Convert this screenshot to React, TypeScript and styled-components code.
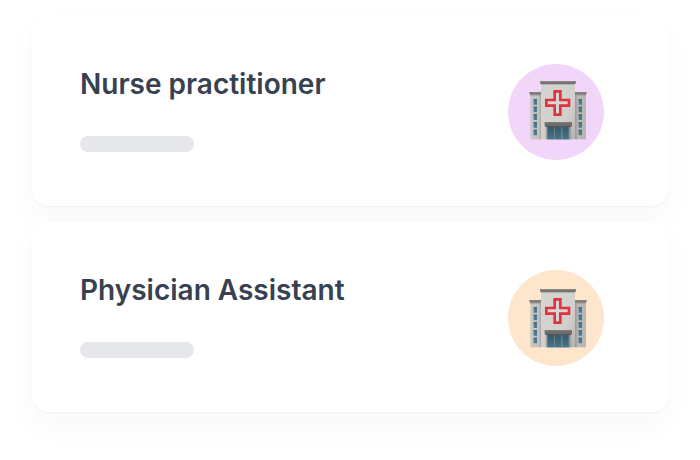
import React, { useId } from "react";
import styled, { createGlobalStyle } from "styled-components";

const GlobalStyle = createGlobalStyle`
  *, *::before, *::after { box-sizing: border-box; }
  body {
    margin: 0;
    background: #fff;
    color: #374151;
    font-family: Inter, "Liberation Sans", sans-serif;
  }
`;

const CardList = styled.main`
  display: flex;
  flex-direction: column;
  gap: 16px;
  min-height: 100vh;
  padding: 16px 32px;
`;

const Card = styled.article`
  display: flex;
  align-items: flex-start;
  justify-content: space-between;
  gap: 24px;
  padding: 48px 64px 46px 48px;
  border-radius: 16px;
  background: #fff;
  box-shadow: 0 1px 2px rgba(0, 0, 0, 0.04), 0 14px 32px rgba(0, 0, 0, 0.03);
`;

const Details = styled.div`
  display: flex;
  flex-direction: column;
  gap: 32px;
`;

const Title = styled.h2`
  margin: 0;
  font-size: 28px;
  font-weight: 600;
  font-optical-sizing: none;
  line-height: 40px;
`;

const Placeholder = styled.div`
  width: 114px;
  height: 16px;
  border-radius: 8px;
  background: #e5e7eb;
`;

const Avatar = styled.div<{ $tint: string }>`
  display: flex;
  flex: none;
  width: 96px;
  height: 96px;
  border-radius: 50%;
  background: ${({ $tint }) => $tint};
`;

const Drawing = styled.svg`
  width: 100%;
  height: 100%;
`;

const windowRows = [104, 127, 150, 173, 196];

function Hospital({ drop }: { drop: number }) {
  const id = useId();
  const wall = `${id}wall`;
  const left = `${id}left`;
  const right = `${id}right`;
  const roof = `${id}roof`;
  const glass = `${id}glass`;
  return (
    <Drawing viewBox="0 0 288 288" aria-hidden="true">
      <defs>
        <linearGradient id={wall} x1="0" y1="0" x2="1" y2="1">
          <stop offset="0" stopColor="#d6d4d0" />
          <stop offset="0.65" stopColor="#d2d0cd" />
          <stop offset="1" stopColor="#b4b2af" />
        </linearGradient>
        <linearGradient id={left}>
          <stop offset="0" stopColor="#c9c7c3" />
          <stop offset="0.75" stopColor="#c3c1be" />
          <stop offset="1" stopColor="#a5a3a0" />
        </linearGradient>
        <linearGradient id={right}>
          <stop offset="0" stopColor="#989795" />
          <stop offset="0.3" stopColor="#bdbbb8" />
          <stop offset="1" stopColor="#b7b5b2" />
        </linearGradient>
        <linearGradient id={roof} x1="0" y1="0" x2="0" y2="1">
          <stop offset="0" stopColor="#918f8d" />
          <stop offset="0.5" stopColor="#7a7876" />
          <stop offset="1" stopColor="#706e6c" />
        </linearGradient>
        <linearGradient id={glass} x1="0" y1="0" x2="0" y2="1">
          <stop offset="0" stopColor="#345668" />
          <stop offset="1" stopColor="#48768b" />
        </linearGradient>
      </defs>
      <g transform={`translate(0 ${drop})`}>
        <path d="M67 92h33v134H67z" fill={`url(#${left})`} />
        <path d="M201 92h33v134h-33z" fill={`url(#${right})`} />
        <path d="M63 84h37v8H66z" fill={`url(#${roof})`} />
        <path d="M201 84h36l-3 8h-33z" fill={`url(#${roof})`} />
        <path d="M67 92h33v3H67zM201 92h33v3h-33z" fill="#a5a3a0" />
        {windowRows.map((y) => (
          <g key={y}>
            <path d={`M77 ${y + 1}h10v17H77zM212 ${y + 1}h10v17h-10z`} fill="#487b92" />
            <path d={`M77 ${y + 1}h10v4H77zM212 ${y + 1}h10v4h-10z`} fill="#466a7b" />
          </g>
        ))}
        <path d="M99 58h102v168H99z" fill={`url(#${wall})`} />
        <path d="M99 59h102v3H99z" fill="#aaa8a5" />
        <path d="M96 51h108v6l-3 3H99l-3-3z" fill={`url(#${roof})`} />
        <path
          d="M140 82h17v26h26v17h-26v27h-17v-27h-25v-17h25z"
          fill="#d8d5d2"
          stroke="#df343d"
          strokeWidth="8"
        />
        <path d="M113 187h77v39h-77z" fill="#a5a4a2" />
        <path d="M118 187h66v39h-66z" fill={`url(#${glass})`} />
        <path d="M138 187h2v39h-2zM160 187h3v39h-3z" fill="#849398" />
        <path d="M182 187h2v39h-2z" fill="#849398" />
        <path d="M110 174h82v12h-82z" fill="#706e6d" />
        <path d="M110 174h82v3h-82z" fill="#807e7c" />
        <path d="M112 186h78v3h-78z" fill="#4f5558" />
      </g>
    </Drawing>
  );
}

const roles = [
  { title: "Nurse practitioner", tint: "#f1d6fa", drop: 0 },
  { title: "Physician Assistant", tint: "#fde6cc", drop: 6 },
];

export default function App() {
  return (
    <>
      <GlobalStyle />
      <CardList>
        {roles.map(({ title, tint, drop }) => (
          <Card key={title}>
            <Details>
              <Title>{title}</Title>
              <Placeholder />
            </Details>
            <Avatar $tint={tint}>
              <Hospital drop={drop} />
            </Avatar>
          </Card>
        ))}
      </CardList>
    </>
  );
}
